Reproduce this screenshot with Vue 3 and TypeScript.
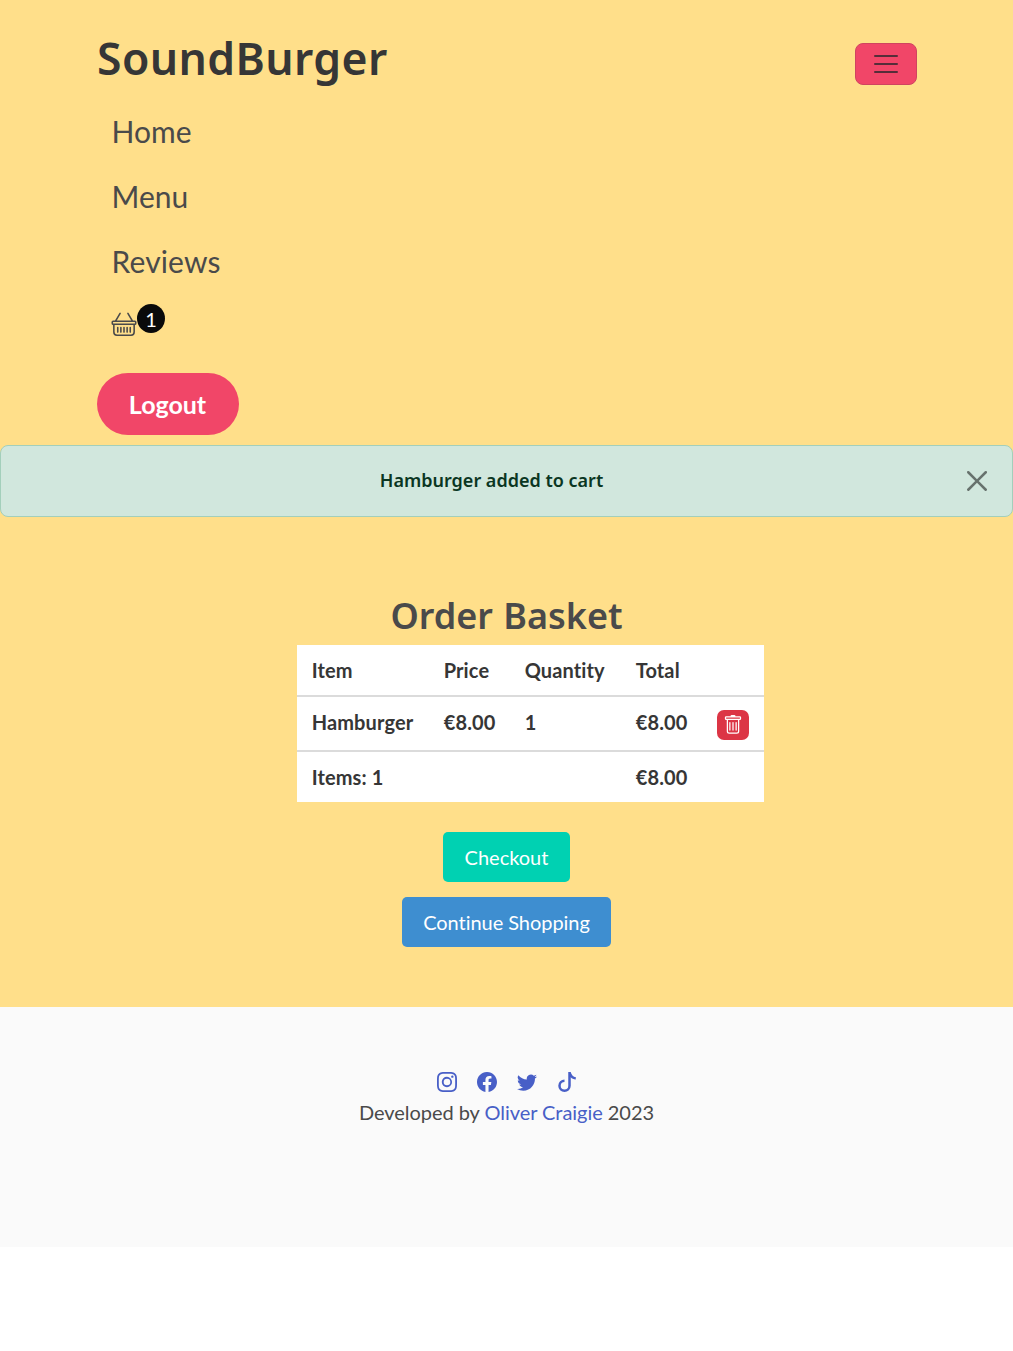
<script setup lang="ts">
import { ref } from 'vue'

interface BasketLine {
  name: string
  price: string
  quantity: number
  total: string
}

interface SocialLink {
  label: string
  path: string
}

const navLinks: string[] = ['Home', 'Menu', 'Reviews']
const lines = ref<BasketLine[]>([
  { name: 'Hamburger', price: '€8.00', quantity: 1, total: '€8.00' },
])
const alertOpen = ref(true)

const socials: SocialLink[] = [
  {
    label: 'Instagram',
    path: 'M8 0C5.829 0 5.556.01 4.703.048 3.85.088 3.269.222 2.76.42a3.917 3.917 0 0 0-1.417.923A3.927 3.927 0 0 0 .42 2.76C.222 3.268.087 3.85.048 4.7.01 5.555 0 5.827 0 8.001c0 2.172.01 2.444.048 3.297.04.852.174 1.433.372 1.942.205.526.478.972.923 1.417.444.445.89.719 1.416.923.51.198 1.09.333 1.942.372C5.555 15.99 5.827 16 8 16s2.444-.01 3.298-.048c.851-.04 1.434-.174 1.943-.372a3.916 3.916 0 0 0 1.416-.923c.445-.445.718-.891.923-1.417.197-.509.332-1.09.372-1.942C15.99 10.445 16 10.173 16 8s-.01-2.445-.048-3.299c-.04-.851-.175-1.433-.372-1.941a3.926 3.926 0 0 0-.923-1.417A3.911 3.911 0 0 0 13.24.42c-.51-.198-1.092-.333-1.943-.372C10.443.01 10.172 0 7.998 0h.003zm-.717 1.442h.718c2.136 0 2.389.007 3.232.046.78.035 1.204.166 1.486.275.373.145.64.319.92.599.28.28.453.546.598.92.11.281.24.705.275 1.485.039.843.047 1.096.047 3.231s-.008 2.389-.047 3.232c-.035.78-.166 1.203-.275 1.485a2.47 2.47 0 0 1-.599.919c-.28.28-.546.453-.92.598-.28.11-.704.24-1.485.276-.843.038-1.096.047-3.232.047s-2.39-.009-3.233-.047c-.78-.036-1.203-.166-1.485-.276a2.478 2.478 0 0 1-.92-.598 2.48 2.48 0 0 1-.6-.92c-.109-.281-.24-.705-.275-1.485-.038-.843-.046-1.096-.046-3.233 0-2.136.008-2.388.046-3.231.036-.78.166-1.204.276-1.486.145-.373.319-.64.599-.92.28-.28.546-.453.92-.598.282-.11.705-.24 1.485-.276.738-.034 1.024-.044 2.515-.045v.002zm4.988 1.328a.96.96 0 1 0 0 1.92.96.96 0 0 0 0-1.92zm-4.27 1.122a4.109 4.109 0 1 0 0 8.217 4.109 4.109 0 0 0 0-8.217zm0 1.441a2.667 2.667 0 1 1 0 5.334 2.667 2.667 0 0 1 0-5.334z',
  },
  {
    label: 'Facebook',
    path: 'M16 8.049c0-4.446-3.582-8.05-8-8.05C3.58 0-.002 3.603-.002 8.05c0 4.017 2.926 7.347 6.75 7.951v-5.625h-2.03V8.05H6.75V6.275c0-2.017 1.195-3.131 3.022-3.131.876 0 1.791.157 1.791.157v1.98h-1.009c-.993 0-1.303.621-1.303 1.258v1.51h2.218l-.354 2.326H9.25V16c3.824-.604 6.75-3.934 6.75-7.951z',
  },
  {
    label: 'Twitter',
    path: 'M5.026 15c6.038 0 9.341-5.003 9.341-9.334 0-.14 0-.282-.006-.422A6.685 6.685 0 0 0 16 3.542a6.658 6.658 0 0 1-1.889.518 3.301 3.301 0 0 0 1.447-1.817 6.533 6.533 0 0 1-2.087.793A3.286 3.286 0 0 0 7.875 6.03a9.325 9.325 0 0 1-6.767-3.429 3.289 3.289 0 0 0 1.018 4.382A3.323 3.323 0 0 1 .64 6.575v.045a3.288 3.288 0 0 0 2.632 3.218 3.203 3.203 0 0 1-.865.115 3.23 3.23 0 0 1-.614-.057 3.283 3.283 0 0 0 3.067 2.277A6.588 6.588 0 0 1 .78 13.58a6.32 6.32 0 0 1-.78-.045A9.344 9.344 0 0 0 5.026 15z',
  },
  {
    label: 'TikTok',
    path: 'M9 0h1.98c.144.715.54 1.617 1.235 2.512C12.895 3.389 13.797 4 15 4v2c-1.753 0-3.07-.814-4-1.829V11a5 5 0 1 1-5-5v2a3 3 0 1 0 3 3V0Z',
  },
]
</script>

<template>
  <div class="page">
    <header class="nav">
      <div class="nav-top">
        <a class="brand display">SoundBurger</a>
        <button class="toggler" aria-label="Toggle navigation">
          <svg viewBox="0 0 30 30" width="30" height="30">
            <path d="M4 7h22M4 15h22M4 23h22" fill="none" stroke="rgba(33,37,41,.75)" stroke-width="2" stroke-linecap="round" stroke-miterlimit="10" />
          </svg>
        </button>
      </div>
      <nav class="links">
        <a v-for="link in navLinks" :key="link" class="link">{{ link }}</a>
        <a class="basket" aria-label="Basket">
          <svg viewBox="0 0 16 16" width="25" height="25" fill="currentColor">
            <path d="M5.757 1.071a.5.5 0 0 1 .172.686L3.383 6h9.234L10.07 1.757a.5.5 0 1 1 .858-.514L13.783 6H15a1 1 0 0 1 1 1v1a1 1 0 0 1-1 1v4.5a2.5 2.5 0 0 1-2.5 2.5h-9A2.5 2.5 0 0 1 1 13.5V9a1 1 0 0 1-1-1V7a1 1 0 0 1 1-1h1.217L5.07 1.243a.5.5 0 0 1 .686-.172zM2 9v4.5A1.5 1.5 0 0 0 3.5 15h9a1.5 1.5 0 0 0 1.5-1.5V9H2zM1 7v1h14V7H1zm3 3a.5.5 0 0 1 .5.5v3a.5.5 0 0 1-1 0v-3A.5.5 0 0 1 4 10zm2 0a.5.5 0 0 1 .5.5v3a.5.5 0 0 1-1 0v-3A.5.5 0 0 1 6 10zm2 0a.5.5 0 0 1 .5.5v3a.5.5 0 0 1-1 0v-3A.5.5 0 0 1 8 10zm2 0a.5.5 0 0 1 .5.5v3a.5.5 0 0 1-1 0v-3a.5.5 0 0 1 .5-.5zm2 0a.5.5 0 0 1 .5.5v3a.5.5 0 0 1-1 0v-3a.5.5 0 0 1 .5-.5z" />
          </svg>
          <span class="count">{{ lines.length }}</span>
        </a>
      </nav>
      <button class="logout">Logout</button>
    </header>

    <div v-if="alertOpen" class="alert">
      <span class="alert-text display">Hamburger added to cart</span>
      <button class="close" aria-label="Close" @click="alertOpen = false">
        <svg viewBox="0 0 16 16" width="20" height="20">
          <path d="M.293.293a1 1 0 0 1 1.414 0L8 6.586 14.293.293a1 1 0 1 1 1.414 1.414L9.414 8l6.293 6.293a1 1 0 0 1-1.414 1.414L8 9.414l-6.293 6.293a1 1 0 0 1-1.414-1.414L6.586 8 .293 1.707a1 1 0 0 1 0-1.414z" />
        </svg>
      </button>
    </div>

    <main class="main">
      <h1 class="title display">Order Basket</h1>
      <table class="table">
        <colgroup>
          <col class="c-item" /><col class="c-price" /><col class="c-qty" /><col class="c-total" /><col class="c-action" />
        </colgroup>
        <thead>
          <tr class="row-head"><th>Item</th><th>Price</th><th>Quantity</th><th>Total</th><th></th></tr>
        </thead>
        <tbody>
          <tr v-for="line in lines" :key="line.name" class="row-line">
            <th>{{ line.name }}</th>
            <th>{{ line.price }}</th>
            <th>{{ line.quantity }}</th>
            <th>{{ line.total }}</th>
            <th>
              <button class="remove" aria-label="Remove">
                <svg viewBox="0 0 16 16" width="20" height="20" fill="currentColor">
                  <path d="M5.5 5.5A.5.5 0 0 1 6 6v6a.5.5 0 0 1-1 0V6a.5.5 0 0 1 .5-.5zm2.5 0a.5.5 0 0 1 .5.5v6a.5.5 0 0 1-1 0V6a.5.5 0 0 1 .5-.5zm3 .5a.5.5 0 0 0-1 0v6a.5.5 0 0 0 1 0V6z" />
                  <path fill-rule="evenodd" d="M14.5 3a1 1 0 0 1-1 1H13v9a2 2 0 0 1-2 2H5a2 2 0 0 1-2-2V4h-.5a1 1 0 0 1-1-1V2a1 1 0 0 1 1-1H6a1 1 0 0 1 1-1h2a1 1 0 0 1 1 1h3.5a1 1 0 0 1 1 1v1zM4.118 4 4 4.059V13a1 1 0 0 0 1 1h6a1 1 0 0 0 1-1V4.059L11.882 4H4.118zM2.5 3V2h11v1h-11z" />
                </svg>
              </button>
            </th>
          </tr>
          <tr class="row-foot"><th>Items: {{ lines.length }}</th><th></th><th></th><th>€8.00</th><th></th></tr>
        </tbody>
      </table>
      <button class="btn checkout">Checkout</button>
      <button class="btn continue">Continue Shopping</button>
    </main>

    <footer class="footer">
      <div class="socials">
        <a v-for="social in socials" :key="social.label" :aria-label="social.label">
          <svg viewBox="0 0 16 16" width="20" height="20" fill="currentColor"><path :d="social.path" /></svg>
        </a>
      </div>
      <p class="credit">Developed by <a>Oliver Craigie</a> 2023</p>
    </footer>
  </div>
</template>

<style>
body {
  background: #fff;
}
</style>

<style scoped>
.page {
  min-height: 1351px;
  font-family: Lato, sans-serif;
  font-size: 20px;
  line-height: 30px;
  font-variant-ligatures: none;
  color: #4a4a4a;
}
button {
  font: inherit;
  border: 0;
  margin: 0;
  padding: 0;
  display: flex;
  align-items: center;
  justify-content: center;
}
svg {
  display: block;
}
.display {
  font-family: "Noto Sans", sans-serif;
  font-weight: 600;
  white-space: nowrap;
}
.nav {
  box-sizing: border-box;
  height: 445px;
  padding: 20px 96px 10px 97px;
  background: #ffdf8a;
}
.nav-top {
  height: 79px;
  display: flex;
  justify-content: space-between;
  align-items: flex-start;
}
.brand {
  font-size: 44.5px;
  line-height: 75px;
  color: #363636;
  letter-spacing: .4px;
}
.toggler {
  box-sizing: border-box;
  width: 62px;
  height: 42px;
  margin-top: 23px;
  border: 1px solid #cf4460;
  border-radius: 8px;
  background: #f14668;
}
.toggler svg {
  width: 30px;
  height: 30px;
}
.links {
  display: flex;
  flex-direction: column;
  padding-left: 14px;
}
.link {
  font-size: 30px;
  line-height: 45px;
  height: 65px;
  box-sizing: border-box;
  padding: 10px 0 0 .5px;
}
.link:nth-child(3) {
  letter-spacing: .15px;
}
.basket {
  display: flex;
  align-items: flex-start;
  height: 79px;
  box-sizing: border-box;
  padding-top: 10px;
}
.basket svg {
  width: 26px;
  margin-top: 7px;
}
.count {
  width: 28px;
  height: 29px;
  border-radius: 50%;
  background: #0a0a0a;
  color: #fff;
  text-align: center;
  line-height: 31px;
}
.logout {
  width: 142px;
  height: 62px;
  padding-right: 1px;
  border-radius: 31px;
  background: #f14668;
  color: #fff;
  font-size: 25px;
  font-weight: 700;
}
.alert {
  position: relative;
  box-sizing: border-box;
  height: 72px;
  border: 1px solid #a3cfbb;
  border-radius: 8px;
  background: #d1e7dd;
  color: #0a3622;
  display: flex;
  align-items: center;
  justify-content: center;
  padding: 0 30px 2px 0;
}
.alert-text {
  font-size: 18px;
}
.close {
  position: absolute;
  right: 25px;
  top: 25px;
  background: none;
  opacity: .5;
}
.page {
  background: linear-gradient(#ffdf8a 0 1007px, #fff 1007px);
}
.main {
  box-sizing: border-box;
  height: 490px;
  padding-top: 75px;
  display: flex;
  flex-direction: column;
  align-items: center;
  background: #ffdf8a;
}
.title {
  margin: 0;
  height: 53px;
  font-size: 36px;
  line-height: 48px;
  word-spacing: 1px;
}
.table {
  width: 467px;
  margin-left: 48px;
  table-layout: fixed;
  border-collapse: separate;
  border-spacing: 0;
  background: #fff;
  color: #363636;
}
.c-item { width: 132px; }
.c-price { width: 81px; }
.c-qty { width: 111px; }
.c-total { width: 81px; }
.c-action { width: 62px; }
.table th {
  box-sizing: border-box;
  padding: 10px 0 0 14.7px;
  text-align: left;
  vertical-align: top;
  font-weight: 700;
  letter-spacing: .12px;
  white-space: nowrap;
}
.row-head th {
  height: 52px;
  border-bottom: 2px solid #dbdbdb;
}
.row-line th {
  height: 55px;
  border-bottom: 2px solid #dbdbdb;
}
.row-foot th {
  height: 50px;
}
.remove {
  width: 32px;
  height: 30px;
  margin-top: 3px;
  border-radius: 7px;
  background: #dc3545;
  color: #fff;
}
.btn {
  height: 50px;
  border-radius: 5px;
  color: #fff;
}
.checkout {
  width: 127px;
  margin: 30px 0 15px;
  background: #00d1b2;
}
.continue {
  width: 209px;
  background: #3e8ed0;
  letter-spacing: -.05px;
}
.footer {
  box-sizing: border-box;
  height: 240px;
  padding-top: 65px;
  background: #fafafa;
  text-align: center;
}
.socials {
  display: flex;
  justify-content: center;
  gap: 20px;
}
.socials a,
.credit a {
  color: #485fc7;
}
.credit {
  margin: 5px 0 0;
  letter-spacing: -.04px;
}
</style>
